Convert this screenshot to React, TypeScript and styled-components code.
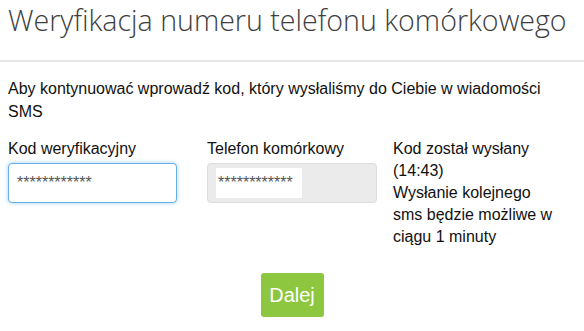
import styled, { createGlobalStyle } from "styled-components";

const GlobalStyle = createGlobalStyle`
    html, body {
        margin: 0;
        padding: 0;
        background: #fff;
    }
    body {
        font-family: "Liberation Sans", Arial, sans-serif;
        color: #222;
    }
`

export default function App() {
    return (
        <>
            <GlobalStyle/>
            <StyledPage>
                <Header>
                    <Title>Weryfikacja numeru telefonu komórkowego</Title>
                </Header>
                <Divider/>
                <Body>
                    <Intro>
                        Aby kontynuować wprowadź kod, który wysłaliśmy do Ciebie w wiadomości SMS
                    </Intro>
                    <FormRow>
                        <Field>
                            <Label htmlFor="code">Kod weryfikacyjny</Label>
                            <Input id="code" defaultValue="************"/>
                        </Field>
                        <Field>
                            <Label>Telefon komórkowy</Label>
                            <ReadonlyInput>
                                <MaskedValue>************</MaskedValue>
                            </ReadonlyInput>
                        </Field>
                        <Note>
                            Kod został wysłany (14:43)<br/>
                            Wysłanie kolejnego sms będzie możliwe w ciągu 1 minuty
                        </Note>
                    </FormRow>
                    <Actions>
                        <SubmitButton>Dalej</SubmitButton>
                    </Actions>
                </Body>
            </StyledPage>
        </>
    );
}

const StyledPage = styled.div`
    width: 584px;
`
const Header = styled.div`
    padding: 0 8px;
    height: 60px;
`
const Title = styled.h1`
    margin: 0;
    font-family: "Open Sans", sans-serif;
    font-weight: 300;
    font-size: 28.6px;
    line-height: 40px;
    color: #3e3e3e;
    white-space: nowrap;
`
const Divider = styled.div`
    height: 2px;
    background: #e6e6e6;
`
const Body = styled.div`
    padding: 15px 8px 0;
`
const Intro = styled.p`
    margin: 0;
    font-size: 16px;
    line-height: 23px;
    color: #111;
`
const FormRow = styled.div`
    display: grid;
    grid-template-columns: 199px 186px 1fr;
    margin-top: 16px;
`
const Field = styled.div`
    display: flex;
    flex-direction: column;
`
const Label = styled.label`
    font-size: 16px;
    line-height: 20px;
    color: #111;
    margin-bottom: 4px;
`
const Input = styled.input`
    box-sizing: border-box;
    width: 169px;
    height: 40px;
    padding: 0 8px;
    font-family: "Liberation Sans", Arial, sans-serif;
    font-size: 16px;
    color: #555;
    border-radius: 4px;
    outline: none;
    border: 1px solid #66afe9;
    box-shadow: 0 0 4px rgba(102, 175, 233, 0.6);
    background: #fff;
`
const ReadonlyInput = styled.div`
    box-sizing: border-box;
    width: 170px;
    height: 40px;
    padding: 4px 8px;
    border: 1px solid #ddd;
    border-radius: 4px;
    background: #ebebeb;
    display: flex;
`
const MaskedValue = styled.span`
    display: flex;
    align-items: center;
    width: 86px;
    padding-left: 2px;
    box-sizing: border-box;
    background: #fff;
    font-size: 16px;
    color: #555;
`
const Note = styled.div`
    max-width: 171px;
    font-size: 16px;
    line-height: 22px;
    color: #111;
    margin-top: -1px;
`
const Actions = styled.div`
    display: flex;
    justify-content: center;
    margin-top: 25px;
`
const SubmitButton = styled.button`
    width: 63px;
    height: 44px;
    border: none;
    border-radius: 3px;
    background: #8dc63f;
    color: #fff;
    font-family: "Liberation Sans", Arial, sans-serif;
    font-size: 20px;
    cursor: pointer;
`
